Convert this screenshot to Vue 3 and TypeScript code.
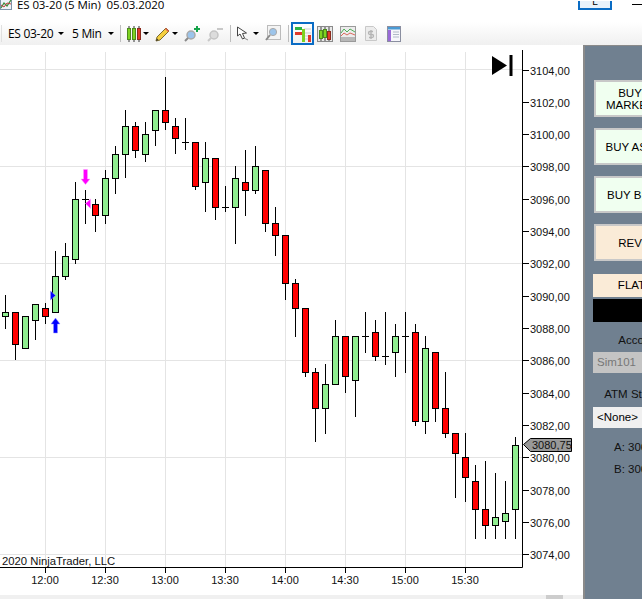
<script setup lang="ts">
type C = [number, number, number, number, number]
// [hi, lo, open-top, body-bottom, kind] kind: 0 red, 1 green, 2 doji
const raw: C[] = [
  [295,329,312,316,1],[312,360,312,344,0],[316,348,316,348,1],[304,340,304,320,1],[303,324,308,316,0],
  [251,312,276,312,1],[243,280,256,276,1],[182,264,199,259,1],[190,224,199,199,2],[199,232,204,215,0],
  [170,224,178,215,1],[146,194,154,178,1],[110,178,126,154,1],[122,158,126,150,0],[122,162,134,154,1],
  [110,146,110,130,1],[77,130,110,122,0],[118,154,126,138,0],[118,150,142,142,2],[142,190,142,186,0],
  [142,212,158,182,1],[158,220,158,207,0],[186,212,207,207,2],[166,244,178,207,1],[150,216,182,190,0],
  [146,194,166,190,1],[170,232,170,223,0],[207,256,223,235,0],[235,300,235,283,0],[279,337,283,308,0],
  [308,377,308,372,0],[368,442,372,408,0],[364,434,384,408,1],[320,384,336,384,1],[336,393,336,376,0],
  [336,417,336,380,1],[312,353,336,336,2],[320,361,332,356,0],[312,365,356,356,2],[324,377,336,352,1],
  [312,373,336,336,2],[324,426,332,421,0],[336,434,348,421,1],[352,422,352,408,0],[372,438,408,433,0],
  [433,498,433,453,0],[433,502,457,477,0],[465,539,481,509,0],[461,539,509,525,0],[473,539,517,525,1],
  [481,539,513,521,1],[437,539,445,509,1],
]
const candles = raw.map((c, i) => ({
  x: 5.5 + i * 10, hi: c[0], lo: c[1], top: c[2] + 0.5, bot: c[3] + 0.5, kind: c[4],
}))
const vLines = [45.5, 105.5, 165.5, 225.5, 285.5, 345.5, 405.5, 465.5]
const hLines = [69.5, 166.5, 263.5, 360.5, 457.5, 554.5]
const times = [[45, '12:00'], [105, '12:30'], [165, '13:00'], [225, '13:30'], [285, '14:00'], [345, '14:30'], [405, '15:00'], [465, '15:30']] as const
const prices = Array.from({ length: 16 }, (_, i) => ({
  y: Math.round(69.5 + i * 32.33) + 0.5,
  label: (3104 - i * 2).toFixed(2).replace('.', ','),
}))
</script>

<template>
  <div class="page">
    <header class="title">
      <svg class="appicon" width="12" height="10" viewBox="0 0 12 10">
        <rect x="0.5" y="-2" width="11" height="11.5" fill="#eef3f8" stroke="#7f93a8" />
        <path d="M1 8 L4 3 L7 6 L11 0" fill="none" stroke="#3a8a3a" stroke-width="1.2" />
        <path d="M1 5 L4 7 L7 3 L11 4" fill="none" stroke="#c04040" stroke-width="1" />
      </svg>
      <span class="title-text">ES 03-20 (5 Min)&nbsp;&nbsp;05.03.2020</span>
      <span class="spring"></span>
      <span class="winbtn">L</span>
      <span class="winline"></span>
    </header>

    <nav class="toolbar">
      <i class="sep first"></i>
      <span class="tool-text ins">ES 03-20</span><i class="caret c1"></i>
      <span class="tool-text per">5 Min</span><i class="caret c2"></i>
      <i class="sep s2"></i>
      <svg class="ic i-candle" width="16" height="18" viewBox="0 0 16 18">
        <path d="M3 1v16M8 1v16M13 1v16" stroke="#333" />
        <rect x="1.5" y="3.5" width="3" height="11" fill="#7ed321" stroke="#4d8a1c" />
        <rect x="6.5" y="3.5" width="3" height="11" fill="#7ed321" stroke="#4d8a1c" />
        <rect x="11.5" y="3.5" width="3" height="11" fill="#e03a2a" stroke="#8c2a1c" />
      </svg>
      <i class="caret c3"></i>
      <svg class="ic i-pencil" width="15" height="16" viewBox="0 0 15 16">
        <path d="M1 15 L2 11 L11 2 L14 5 L5 14 Z" fill="#f5cf3f" stroke="#7a6a30" />
        <path d="M11 2 L14 5 L13 6 L10 3 Z" fill="#e2604f" />
        <path d="M1 15 L2 12.5 L3.5 14 Z" fill="#333" />
      </svg>
      <i class="caret c4"></i>
      <svg class="ic i-zplus" width="16" height="16" viewBox="0 0 16 16">
        <circle cx="7" cy="9" r="4" fill="#9cc4ea" stroke="#a9a9a9" stroke-width="1.5" />
        <path d="M4 12 L1 15" stroke="#8a8a8a" stroke-width="2" />
        <path d="M13 0v6M10 3h6" stroke="#16a34a" stroke-width="2" />
      </svg>
      <svg class="ic i-zminus" width="16" height="16" viewBox="0 0 16 16">
        <circle cx="7" cy="9" r="4" fill="#dcdcdc" stroke="#c4c4c4" stroke-width="1.5" />
        <path d="M4 12 L1 15" stroke="#c8c8c8" stroke-width="2" />
        <path d="M10 3h6" stroke="#c8c8c8" stroke-width="2" />
      </svg>
      <i class="sep s3"></i>
      <svg class="ic i-cursor" width="14" height="15" viewBox="0 0 14 15">
        <path d="M1 1 L1 10 L3.5 8 L6 13 L8 12 L6 7.5 L10 7 Z" transform="translate(0.5 0)" fill="#fff" stroke="#444" />
        <path d="M8 12 L12 14" stroke="#888" />
      </svg>
      <i class="caret c5"></i>
      <svg class="ic i-zoom" width="16" height="17" viewBox="0 0 16 17">
        <rect x="2.5" y="0.5" width="13" height="14" fill="#f4f4f4" stroke="#bbb" />
        <circle cx="8" cy="7" r="3.6" fill="#9cc4ea" stroke="#a9a9a9" />
        <path d="M5 10 L1 15" stroke="#8a8a8a" stroke-width="2" />
      </svg>
      <i class="sep s4"></i>
      <span class="selected">
        <svg width="18" height="16" viewBox="0 0 18 16">
          <path d="M1 3h5M10 3h7M1 7h6M11 7h6M11 10h6M11 13h6" stroke="#cfcfcf" />
          <rect x="1" y="1" width="7" height="3" fill="#2fb344" />
          <rect x="1" y="6" width="7" height="3" fill="#e0392b" />
          <rect x="8" y="3" width="3" height="13" fill="#7ed321" />
          <rect x="14" y="9" width="3" height="7" fill="#e0392b" />
        </svg>
      </span>
      <svg class="ic i-chart" width="16" height="16" viewBox="0 0 16 16">
        <rect x="0.5" y="0.5" width="15" height="15" fill="#e8e8e8" stroke="#8a8a8a" />
        <path d="M4 1v14M8 1v14M12 1v14" stroke="#444" />
        <rect x="2.5" y="4.5" width="3" height="8" fill="#7ed321" stroke="#4d8a1c" />
        <rect x="6.5" y="3.5" width="3" height="8" fill="#7ed321" stroke="#4d8a1c" />
        <rect x="10.5" y="5.5" width="3" height="8" fill="#e03a2a" stroke="#8c2a1c" />
      </svg>
      <svg class="ic i-ind" width="16" height="16" viewBox="0 0 16 16">
        <rect x="0.5" y="0.5" width="15" height="15" fill="#ececec" stroke="#9a9a9a" />
        <path d="M1 11 L5 11 L15 11 L15 15 L1 15 Z" fill="#b8b8b8" />
        <path d="M1 7 L4 3 L7 6 L10 3 L15 6" fill="none" stroke="#4fae57" />
        <path d="M1 10 L4 7 L7 9 L10 7 L15 9" fill="none" stroke="#d9695c" />
      </svg>
      <svg class="ic i-dollar" width="12" height="15" viewBox="0 0 12 15">
        <path d="M0.5 0.5h8l3 3v11h-11Z" fill="#ececec" stroke="#c8c8c8" />
        <path d="M8 5.5H5a1.5 1.5 0 0 0 0 3h2a1.5 1.5 0 0 1 0 3H4M6 4v9" fill="none" stroke="#b4b4b4" stroke-width="1.3" />
      </svg>
      <svg class="ic i-props" width="14" height="16" viewBox="0 0 14 16">
        <rect x="0.5" y="0.5" width="13" height="15" fill="#f6f6fb" stroke="#8a8ea0" />
        <rect x="1" y="1" width="12" height="2.5" fill="#4a9ad4" />
        <rect x="1" y="4" width="3" height="11" fill="#9a6ad8" />
        <path d="M6 6h6M6 8.5h6M6 11h6" stroke="#b0b8c8" />
      </svg>
    </nav>

    <main class="main">
      <div class="chart">
        <svg class="plot" width="581" height="550" viewBox="0 45 581 550">
          <path v-for="x in vLines" :key="'v' + x" :d="`M${x} 52V567`" stroke="#e4e4e4" />
          <path v-for="y in hLines" :key="'h' + y" :d="`M0 ${y}H522`" stroke="#e4e4e4" />

          <g v-for="c in candles" :key="c.x">
            <path :d="`M${c.x} ${c.hi}V${c.lo}`" stroke="#000" />
            <path v-if="c.kind === 2" :d="`M${c.x - 3.5} ${c.top}H${c.x + 3.5}`" stroke="#000" />
            <rect
              v-else
              :x="c.x - 3"
              :y="c.top"
              width="6"
              :height="c.bot - c.top"
              :fill="c.kind === 1 ? '#90ee90' : '#ff0000'"
              stroke="#000"
            />
          </g>

          <path d="M55.5 318 L60 324 L57.5 324 L57.5 333 L53.5 333 L53.5 324 L51 324 Z" fill="#0000ff" stroke="#9a9aff" stroke-width="0.5" />
          <path d="M50.5 291 L55.5 295.5 L50.5 300 Z" fill="#0000ff" stroke="#9a9aff" stroke-width="0.5" />
          <path d="M85.5 184.5 L90 179 L87.5 179 L87.5 169.5 L83.5 169.5 L83.5 179 L81 179 Z" fill="#ff00ff" stroke="#ffa0ff" stroke-width="0.5" />
          <path d="M90.5 199 L85.5 203.5 L90.5 208.5 Z" fill="#ff00ff" stroke="#ffa0ff" stroke-width="0.5" />

          <path d="M522.5 50V567.5H0" fill="none" stroke="#000" />
          <path v-for="p in prices" :key="p.label" :d="`M523 ${p.y}H529`" stroke="#000" />
          <text v-for="p in prices" :key="'t' + p.label" x="530" :y="p.y + 4" class="lbl">{{ p.label }}</text>

          <path v-for="t in times" :key="'tt' + t[0]" :d="`M${t[0] + 0.5} 568V573`" stroke="#000" />
          <text v-for="t in times" :key="'tl' + t[0]" :x="t[0]" y="584" text-anchor="middle" class="lbl">{{ t[1] }}</text>
          <text x="2" y="565" class="lbl copy">2020 NinjaTrader, LLC</text>

          <path d="M523.5 444.5 L530.5 438.5 H571.5 V451.5 H530.5 Z" fill="#999" stroke="#000" />
          <text x="532" y="449" class="lbl">3080,75</text>

          <path d="M492 56 L507 65.5 L492 75 Z" fill="#000" />
          <rect x="509.5" y="55" width="3" height="21" fill="#000" />
        </svg>
        <div class="scroll"><span class="thumb"></span></div>
      </div>

      <aside class="panel">
        <button class="btn buy tall two">BUY<br />MARKET</button>
        <button class="btn buy tall">BUY ASK</button>
        <button class="btn buy tall">BUY BID</button>
        <button class="btn rev tall">REV</button>
        <div class="flat">FLAT</div>
        <div class="black"></div>
        <div class="label l-acc">Account</div>
        <div class="field sim">Sim101</div>
        <div class="label l-atm">ATM Strategy</div>
        <div class="field none">&lt;None&gt;</div>
        <div class="quote q-a">A: 3063</div>
        <div class="quote q-b">B: 3063</div>
      </aside>
    </main>
  </div>
</template>

<style>
html, body { margin: 0; background: #fff; overflow: hidden; }
</style>

<style scoped>
.page {
  width: 642px;
  height: 599px;
  display: flex;
  flex-direction: column;
  overflow: hidden;
  font-family: "Liberation Sans", Arial, sans-serif;
  color: #000;
}
.title {
  height: 22px;
  flex: none;
  display: flex;
  align-items: flex-start;
  background: #fff;
}
.appicon { flex: none; margin-left: 0; }
.title-text {
  margin-left: 5px;
  font-family: "Open Sans", sans-serif;
  font-size: 11.5px;
  line-height: 12px;
  letter-spacing: -0.1px;
  margin-top: -1px;
  white-space: nowrap;
}
.spring { flex: 1; }
.winbtn {
  width: 30px;
  height: 6px;
  border: 2px solid #0a6cc4;
  border-top: 0;
  background: #e8f2fb;
  margin-top: 1px;
  font-size: 10px;
  line-height: 0;
  text-align: center;
  overflow: hidden;
  padding-top: 1px;
}
.winline {
  width: 10px;
  height: 1px;
  background: #000;
  margin: 4px 0 0 20px;
}
.toolbar {
  height: 23px;
  flex: none;
  display: flex;
  align-items: center;
  background: linear-gradient(#fff, #f0f0f0);
}
.sep { flex: none; width: 1px; height: 17px; background: #bdbdbd; display: block; }
.first { margin-left: 1px; background: #e0e0e0; }
.tool-text {
  font-family: "Open Sans", sans-serif;
  font-size: 12px;
  white-space: nowrap;
  flex: none;
  letter-spacing: -0.3px;
}
.ins { margin-left: 6px; width: 50px; }
.caret {
  flex: none;
  width: 0;
  height: 0;
  border-left: 3px solid transparent;
  border-right: 3px solid transparent;
  border-top: 3px solid #000;
  display: block;
}
.per { margin-left: 8px; width: 36px; }
.s2 { margin-left: 6px; }
.ic { flex: none; display: block; }
.i-candle { margin-left: 5px; }
.c3 { margin-left: 1px; }
.i-pencil { margin-left: 6px; }
.c4 { margin-left: 2px; }
.i-zplus { margin-left: 6px; }
.i-zminus { margin-left: 7px; }
.s3 { margin-left: 7px; }
.i-cursor { margin-left: 5px; }
.c5 { margin-left: 3px; }
.i-zoom { margin-left: 6px; }
.s4 { margin-left: 7px; }
.selected {
  flex: none;
  margin-left: 2px;
  width: 19px;
  height: 19px;
  border: 2px solid #0a6cc4;
  display: flex;
  align-items: center;
  justify-content: center;
  margin-right: 2px;
}
.i-chart { margin-left: 1px; }
.i-ind { margin-left: 7px; }
.i-dollar { margin-left: 9px; }
.i-props { margin-left: 10px; }

.main {
  flex: 1;
  display: flex;
  min-height: 0;
}
.chart {
  width: 583px;
  flex: none;
  display: flex;
  flex-direction: column;
  background: #fff;
}
.plot { display: block; flex: none; }
.lbl {
  font-family: "Liberation Sans", Arial, sans-serif;
  font-size: 11px;
  fill: #111;
}
.copy { font-size: 11.3px; }
.scroll {
  height: 4px;
  flex: none;
  background: #f0f0f0;
  display: flex;
}
.thumb {
  margin-left: 546px;
  width: 17px;
  background: #cdcdcd;
}
.panel {
  flex: 1;
  min-width: 0;
  box-sizing: border-box;
  background: #708090;
  border-left: 2px solid #8a8a8a;
  border-top: 1px solid #8a8a8a;
  overflow: hidden;
  display: flex;
  flex-direction: column;
  align-items: flex-start;
  padding: 34px 0 0 8px;
  font-size: 12px;
}
.btn {
  flex: none;
  box-sizing: border-box;
  width: 72px;
  margin: 0 0 11px 1px;
  padding: 0;
  border: 2px solid #c8c8c8;
  font: inherit;
  font-size: 11.5px;
  line-height: 12px;
  color: #000;
  text-align: center;
}
.tall { height: 37px; }
.buy { background: #f0fff0; }
.rev { background: #faebd7; margin-bottom: 13px; }
.flat {
  flex: none;
  box-sizing: border-box;
  width: 73px;
  height: 23px;
  padding-left: 4px;
  background: #faebd7;
  text-align: center;
  line-height: 23px;
  font-size: 11.5px;
}
.black {
  flex: none;
  width: 73px;
  height: 23px;
  margin-top: 2px;
  background: #000;
}
.label {
  flex: none;
  width: 92px;
  text-align: center;
  white-space: nowrap;
  color: #111;
}
.l-acc { margin-top: 11px; height: 14px; line-height: 14px; font-size: 11.5px; }
.l-atm { margin-top: 14px; height: 14px; line-height: 14px; font-size: 11.5px; }
.field {
  flex: none;
  box-sizing: border-box;
  width: 73px;
  height: 21px;
  line-height: 21px;
  padding-left: 4px;
  font-size: 11.5px;
}
.sim { margin-top: 5px; background: #c4c4c4; color: #777; }
.none { margin-top: 6px; background: #f0f0f0; color: #000; }
.quote { flex: none; margin-left: 21px; font-size: 11.5px; line-height: 14px; white-space: nowrap; color: #111; }
.q-a { margin-top: 12px; }
.q-b { margin-top: 8px; }
</style>
